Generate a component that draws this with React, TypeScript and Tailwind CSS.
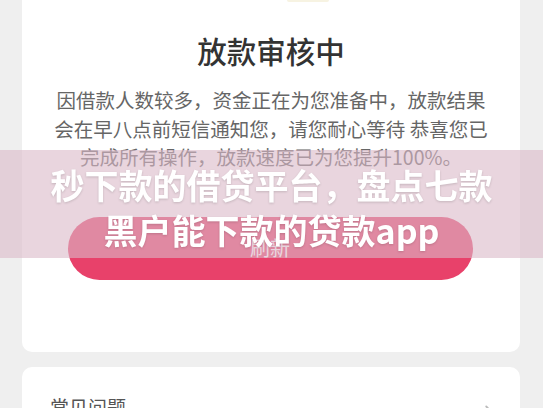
import { ChevronRight } from 'lucide-react';

const cjk = { fontFamily: '"Noto Sans CJK SC", "Noto Sans", sans-serif' };

export default function App() {
    return (
        <div className="relative w-[543px] h-[408px] overflow-hidden bg-[#efefef] px-[22px]" style={cjk}>
            {/* status card */}
            <div className="relative h-[352px] w-[498px] bg-white rounded-b-[10px] flex flex-col items-center">
                <div className="absolute top-0 left-[265px] h-[2px] w-[42px] rounded-b-full bg-[#f7f3e2]" />
                <h1 className="mt-[28px] text-[29.5px] leading-[44px] font-medium text-[#333]">放款审核中</h1>
                <p className="mt-[14px] text-center text-[19.5px] leading-[28.5px] text-[#666] whitespace-nowrap">
                    因借款人数较多，资金正在为您准备中，放款结果
                    <br />
                    会在早八点前短信通知您，请您耐心等待 恭喜您已
                    <br />
                    完成所有操作，放款速度已为您提升100%。
                </p>
                <button className="mt-[45px] w-[405px] h-[63px] rounded-full bg-[#e8416a] text-white text-[20px] ml-[-2px]">
                    刷新
                </button>
            </div>

            {/* faq card */}
            <div className="mt-[15px] h-[60px] w-[498px] bg-white rounded-t-[10px] pl-[28px] pr-[20px] pt-[26px] flex items-start justify-between">
                <span className="text-[19px] leading-[28px] text-[#555]">常见问题</span>
                <ChevronRight className="w-[22px] h-[22px] mt-[8px] text-[#bbb]" strokeWidth={2} />
            </div>

            {/* title banner */}
            <div className="absolute left-0 right-0 top-[150px] h-[108px] bg-[rgba(218,185,200,0.6)] pt-[12px] text-center">
                <p className="text-[34px] leading-[45px] font-bold text-white whitespace-nowrap drop-shadow-[0_1px_1px_rgba(0,0,0,0.15)]">
                    秒下款的借贷平台，盘点七款
                    <br />
                    黑户能下款的贷款app
                </p>
            </div>
        </div>
    );
}
